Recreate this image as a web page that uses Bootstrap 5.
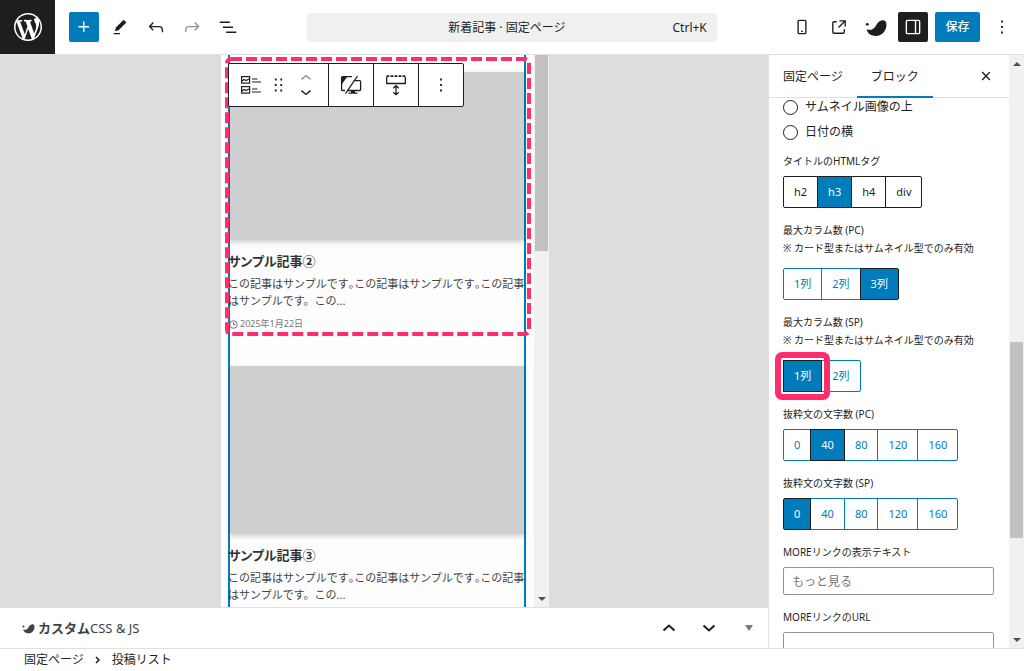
<!DOCTYPE html>
<html lang="ja">
<head>
<meta charset="utf-8">
<meta name="viewport" content="width=device-width, initial-scale=1">
<title>新着記事 · 固定ページ</title>
<link href="https://cdn.jsdelivr.net/npm/bootstrap@5.3.0/dist/css/bootstrap.min.css" rel="stylesheet">
<style>
  :root { --blue:#007cba; --ink:#1e1e1e; --line:#e0e0e0; --pink:#ff2d6c; }
  body { font:12px/18px "Noto Sans","Noto Sans CJK JP",sans-serif; color:var(--ink); background:#fff; }
  svg { display:block; fill:currentColor; flex:none; }
  button { font:inherit; color:inherit; border:0; background:none; padding:0; }
  .editor-top { height:55px; border-bottom:1px solid var(--line); }
  .top-side { width:30%; flex:none; }
  .tools-left { gap:6px; margin-left:14px; }
  .tools-right { gap:7px; padding:12px 7px 0 0; }
  .site-home { width:55px; height:54px; background:var(--ink); color:#fff; }
  .tool-btn { width:30px; height:30px; display:flex; align-items:center; justify-content:center; border-radius:2px; flex:none; }
  .tool-btn.is-primary { background:var(--blue); color:#fff; }
  .tool-btn.is-dark { background:var(--ink); color:#fff; }
  .is-off { color:#949494; }
  .save-btn { width:45px; height:30px; background:var(--blue); color:#fff; border-radius:2px; font-weight:500; }
  .doc-title { width:40%; height:29px; background:#f0f0f0; border-radius:4px; margin-top:13px; padding:0 10px 0 34px; }
  .stage { background:#ddd; padding-left:2px; }
  .device { width:328px; background:#fdfdfd; }
  .device-page { padding:0 8px 0 7px; }
  .post-list { border:solid var(--blue); border-width:0 2px; padding-top:17px; height:100%; }
  .entry { height:294px; }
  .thumb { height:168px; background:#cfcfcf; box-shadow:0 2px 5px rgba(0,0,0,.2); margin-bottom:12px; }
  .entry h3 { font-size:13px; line-height:18px; font-weight:bold; margin:0 -2px 5px; color:#333; font-feature-settings:"palt"; }
  .entry p { font-size:11px; line-height:17px; margin:0 -2px 8px; white-space:nowrap; color:#444; }
  .half-stop { font-feature-settings:"palt"; }
  .entry time { font-size:9px; line-height:14px; color:#777; gap:2px; }
  .entry-mark { position:absolute; left:-5px; top:-15px; width:306px; height:279px; overflow:visible; pointer-events:none; }
  .entry-mark rect { fill:none; stroke:var(--pink); stroke-width:4; stroke-dasharray:11 4; }
  .block-bar { position:absolute; left:7px; top:8px; height:44px; background:#fff; border:1px solid var(--ink); border-radius:2px; z-index:2; }
  .block-bar > * + * { border-left:1px solid var(--ink); }
  .bar-cell { width:45px; display:flex; align-items:center; justify-content:center; }
  .bar-main { width:99px; padding-left:11px; gap:8px; }
  .line-icon { fill:none; stroke:currentColor; }
  .scroll-track { width:15px; background:#f1f1f1; padding:0 1px; flex:none; display:flex; flex-direction:column; }
  .scroll-thumb { background:#c1c1c1; }
  .arrow-up, .arrow-down { border:4px solid transparent; width:0; height:0; align-self:center; }
  .arrow-up { border-bottom-color:#505050; border-top:0; margin:7px 0; }
  .arrow-down { border-top-color:#505050; border-bottom:0; margin:6px 0; }
  .meta-bar { height:41px; padding:0 8px 0 22px; border-top:1px solid var(--line); color:#3c434a; }
  .meta-title { font-size:13px; padding-left:3px; }
  .meta-tools { gap:18px; color:var(--ink); }
  .settings { width:256px; border-left:1px solid var(--line); }
  .settings-tabs { height:43px; border-bottom:1px solid var(--line); flex:none; }
  .tab-btn { height:43px; padding:1px 14px 0; }
  .tab-btn.active { box-shadow:inset 0 -2px 0 var(--blue); }
  .settings-body { padding:0 15px 0 14px; }
  .settings-body fieldset, .field { margin-bottom:14px; }
  .settings-body legend, .field label, .note { font-size:10px; line-height:16px; margin:0; float:none; }
  .note { margin:2px 0 12px; }
  .gap-b { margin-bottom:7px !important; }
  .radio-row { height:18px; margin-bottom:7px; display:flex; align-items:center; gap:7px; }
  .radio-row + fieldset { margin-top:12px; }
  .radio-row input { appearance:none; width:15px; height:15px; border:1px solid var(--ink); border-radius:50%; margin:0; background:#fff; }
  .seg { color:var(--blue); font-size:11px; }
  .seg button { height:32px; padding:0 10px; border:1px solid var(--blue); position:relative; }
  .seg button + button, .seg .marked + button { margin-left:-1px; }
  .seg button[aria-pressed=true] { background:var(--blue); color:#fff; border-color:var(--ink); z-index:1; }
  .seg.dark { color:var(--ink); }
  .seg.dark button { border-color:var(--ink); }
  .seg > :first-child { border-radius:2px 0 0 2px; }
  .seg > :last-child { border-radius:0 2px 2px 0; }
  .marked { position:relative; z-index:2; }
  .marked::after { content:""; position:absolute; inset:-8px; border:6px solid var(--pink); border-radius:7px; z-index:2; pointer-events:none; }
  .field input { width:100%; height:28px; border:1px solid #949494; border-radius:2px; padding:0 8px; font:inherit; display:block; }
  .field input::placeholder { color:#757575; }
  .crumbs { height:23px; border-top:1px solid var(--line); padding-left:24px; }
  .crumbs a { color:var(--ink); text-decoration:none; }
</style>
</head>
<body class="vh-100 d-flex flex-column overflow-hidden">

<header class="editor-top d-flex align-items-start flex-shrink-0">
  <div class="top-side d-flex align-items-center">
    <a href="#" class="site-home d-flex align-items-center justify-content-center" aria-label="WordPress">
      <svg width="28" height="28" viewBox="0 0 20 20"><path d="M20 10c0-5.51-4.49-10-10-10C4.48 0 0 4.49 0 10c0 5.52 4.48 10 10 10 5.51 0 10-4.48 10-10zM7.78 15.37L4.37 6.22c.55-.02 1.17-.08 1.17-.08.5-.06.44-1.13-.06-1.11 0 0-1.45.11-2.37.11-.18 0-.37 0-.58-.01C4.12 2.69 6.87 1.11 10 1.11c2.33 0 4.45.87 6.05 2.34-.68-.11-1.65.39-1.65 1.58 0 .74.45 1.36.9 2.1.35.61.55 1.36.55 2.46 0 1.49-1.4 5-1.4 5l-3.03-8.37c.54-.02.82-.17.82-.17.5-.05.44-1.25-.06-1.22 0 0-1.44.12-2.38.12-.87 0-2.33-.12-2.33-.12-.5-.03-.56 1.2-.06 1.22l.92.08 1.26 3.41zM17.41 10c.24-.64.74-1.87.43-4.25.7 1.29 1.05 2.71 1.05 4.25 0 3.29-1.73 6.24-4.4 7.78.97-2.59 1.94-5.2 2.92-7.78zM6.1 18.09C3.12 16.65 1.11 13.53 1.11 10c0-1.3.23-2.48.72-3.59C3.25 10.3 4.67 14.2 6.1 18.09zm4.03-6.63l2.58 6.98c-.86.29-1.76.45-2.71.45-.79 0-1.57-.11-2.29-.33.81-2.38 1.62-4.74 2.42-7.1z"/></svg>
    </a>
    <div class="tools-left d-flex">
      <button class="tool-btn is-primary" aria-label="ブロックを追加"><svg width="22" height="22" viewBox="0 0 24 24"><path d="M11 12.5V17.5H12.5V12.5H17.5V11H12.5V6H11V11H6V12.5H11Z"/></svg></button>
      <button class="tool-btn" aria-label="ツール"><svg width="22" height="22" viewBox="0 0 24 24"><path d="m19 7-3-3-8.5 8.5-1 4 4-1L19 7Zm-7 11.5H5V20h7v-1.5Z"/></svg></button>
      <button class="tool-btn" aria-label="元に戻す"><svg width="22" height="22" viewBox="0 0 24 24"><path d="M18.3 11.7c-.6-.6-1.4-.9-2.3-.9H6.7l2.9-3.3-1.1-1-4.5 5L8.5 16l1-1-2.7-2.7H16c.5 0 .9.2 1.3.5 1 1 1 3.4 1 4.5v.3h1.5v-.2c0-1.5 0-4.3-1.5-5.7z"/></svg></button>
      <button class="tool-btn is-off" aria-label="やり直す"><svg width="22" height="22" viewBox="0 0 24 24"><path d="M15.6 6.5l-1.1 1 2.9 3.3H8c-.9 0-1.7.3-2.3.9-1.4 1.5-1.4 4.2-1.4 5.6v.2h1.5v-.3c0-1.1 0-3.5 1-4.5.3-.3.7-.5 1.3-.5h9.2L14.5 15l1.1 1.1 4.6-4.6-4.6-5z"/></svg></button>
      <button class="tool-btn" aria-label="リスト表示"><svg width="22" height="22" viewBox="0 0 24 24"><path d="M3 6h11v1.5H3V6Zm3.5 5.5h11V13h-11v-1.5ZM21 17H10v1.5h11V17Z"/></svg></button>
    </div>
  </div>
  <button class="doc-title d-flex align-items-center">
    <span class="flex-fill text-center">新着記事 · 固定ページ</span><span>Ctrl+K</span>
  </button>
  <div class="top-side tools-right d-flex justify-content-end">
    <button class="tool-btn" aria-label="表示"><svg width="22" height="22" viewBox="0 0 24 24"><path d="M15 4H9c-1.1 0-2 .9-2 2v12c0 1.1.9 2 2 2h6c1.1 0 2-.9 2-2V6c0-1.1-.9-2-2-2zm.5 14c0 .3-.2.5-.5.5H9c-.3 0-.5-.2-.5-.5V6c0-.3.2-.5.5-.5h6c.3 0 .5.2.5.5v12zm-4.5-.5h2V16h-2v1.5z"/></svg></button>
    <button class="tool-btn" aria-label="新しいタブで表示"><svg width="22" height="22" viewBox="0 0 24 24"><path d="M19.5 4.5h-7V6h4.44l-5.97 5.97 1.06 1.06L18 7.06v4.44h1.5v-7Zm-13 1a2 2 0 0 0-2 2v10a2 2 0 0 0 2 2h10a2 2 0 0 0 2-2v-3H17v3a.5.5 0 0 1-.5.5h-10a.5.5 0 0 1-.5-.5v-10a.5.5 0 0 1 .5-.5h3V5.5h-3Z"/></svg></button>
    <button class="tool-btn" aria-label="SWELL設定"><svg width="22" height="19" viewBox="0 0 22 19"><circle cx="2.3" cy="6.3" r="1.4"/><path d="M1.6 11.3C5 12.6 8.600 11.400 10.600 8.200 12.400 4.800 14.600 2.200 18.200 2.200 21 2.300 21.900 5.200 21.300 8.800 20.400 13.800 16.500 18 11 18 6 18 2.500 15.400 1.600 11.300Z"/></svg></button>
    <button class="tool-btn is-dark" aria-label="設定"><svg width="22" height="22" viewBox="0 0 24 24"><path d="M18 4H6c-1.1 0-2 .9-2 2v12c0 1.1.9 2 2 2h12c1.1 0 2-.9 2-2V6c0-1.1-.9-2-2-2zm-4 14.5H6c-.3 0-.5-.2-.5-.5V6c0-.3.2-.5.5-.5h8v13zm4.5-.5c0 .3-.2.5-.5.5h-2.5v-13H18c.3 0 .5.2.5.5v12z"/></svg></button>
    <button class="save-btn">保存</button>
    <button class="tool-btn" aria-label="オプション"><svg width="22" height="22" viewBox="0 0 24 24"><path d="M13 19h-2v-2h2v2zm0-6h-2v-2h2v2zm0-6h-2V5h2v2z"/></svg></button>
  </div>
</header>

<div class="d-flex flex-fill overflow-hidden">
  <main class="d-flex flex-column flex-fill">
    <div class="stage d-flex justify-content-center flex-fill overflow-hidden">
      <div class="device d-flex position-relative">
        <div class="device-page flex-fill overflow-hidden">
          <div class="post-list">
            <article class="entry position-relative">
              <div class="thumb"></div>
              <h3>サンプル記事②</h3>
              <p>この記事はサンプルです<span class="half-stop">。</span>この記事はサンプルです<span class="half-stop">。</span>この記事<br>はサンプルです。この...</p>
              <time class="d-flex align-items-center" datetime="2025-01-22"><svg class="line-icon" width="8" height="9" viewBox="1 0 8 9"><circle cx="4.5" cy="4.5" r="3.8"/><path d="M4.5 2v2.7h2"/></svg>2025年1月22日</time>
              <svg class="entry-mark"><rect x="2" y="2" width="302" height="275" rx="4"/></svg>
            </article>
            <article class="entry">
              <div class="thumb"></div>
              <h3>サンプル記事③</h3>
              <p>この記事はサンプルです<span class="half-stop">。</span>この記事はサンプルです<span class="half-stop">。</span>この記事<br>はサンプルです。この...</p>
            </article>
          </div>
        </div>
        <div class="scroll-track">
          <div class="scroll-thumb" style="height:196px"></div>
          <div class="flex-fill"></div>
          <i class="arrow-down"></i>
        </div>
        <div class="block-bar d-flex">
          <div class="bar-main d-flex align-items-center">
            <button aria-label="投稿リスト"><svg class="line-icon" width="22" height="22" viewBox="0 0 22 22" stroke-width="1.2"><rect x="1.6" y="2.6" width="8" height="6.5"/><rect x="1.6" y="12.6" width="8" height="6.5"/><path d="M2 7l2-1.500 2 1L9 5M2 17l2-1.500 2 1L9 15M12 5h5.500M12 8h9M12 15h5.500M12 18h9"/></svg></button>
            <button aria-label="ドラッグ"><svg width="17" height="22" viewBox="3 0 18 24"><path d="M8 7h2V5H8v2zm0 6h2v-2H8v2zm0 6h2v-2H8v2zm6-14v2h2V5h-2zm0 8h2v-2h-2v2zm0 6h2v-2h-2v2z"/></svg></button>
            <div class="d-flex flex-column">
              <button class="is-off" aria-label="上に移動"><svg width="22" height="15" viewBox="0 3 24 16"><path d="M6.5 12.4L12 8l5.5 4.4-.9 1.2L12 10l-4.5 3.6-1-1.2z"/></svg></button>
              <button aria-label="下に移動"><svg width="22" height="15" viewBox="0 5 24 16"><path d="M17.5 11.6L12 16l-5.5-4.4.9-1.2L12 14l4.5-3.6 1 1.2z"/></svg></button>
            </div>
          </div>
          <button class="bar-cell" aria-label="表示デバイス"><svg class="line-icon" width="22" height="20" viewBox="0 0 22 20" stroke-width="1.3"><path d="M12 1.7H2.5Q1.6 1.7 1.6 2.6v12q0 .9.9.9H5M13.5 5.7h6.2q.9 0 .9.9v8q0 .9-.9.9H8M17.5 1 5.5 18.7"/><path d="M2 2h5L2 9zM11 16h4v1.6h2.500v1.200h-9v-1.200H11z" fill="currentColor" stroke="none"/></svg></button>
          <button class="bar-cell" aria-label="余白"><svg class="line-icon" width="22" height="22" viewBox="0 0 22 22" stroke-width="1.3"><path d="M1.7 3v6.5h18.600V3"/><path d="M1.5 2.2h19" stroke-width="1.8" stroke-dasharray="2.8 1.2"/><path d="M11 12v8M8.200 14.200 11 11.700l2.800 2.500M8.200 18.200 11 20.700l2.800-2.500"/></svg></button>
          <button class="bar-cell" aria-label="その他"><svg width="22" height="22" viewBox="0 0 24 24"><path d="M13 19h-2v-2h2v2zm0-6h-2v-2h2v2zm0-6h-2V5h2v2z"/></svg></button>
        </div>
      </div>
    </div>
    <div class="meta-bar d-flex align-items-center flex-shrink-0">
      <svg width="13" height="11" viewBox="0 0 22 19"><circle cx="2.3" cy="6" r="1.8"/><path d="M1.6 11.3C5 12.6 8.600 11.400 10.600 8.200 12.400 4.800 14.600 2.200 18.200 2.200 21 2.300 21.900 5.200 21.300 8.800 20.400 13.800 16.500 18 11 18 6 18 2.500 15.400 1.600 11.300Z"/></svg>
      <span class="meta-title flex-fill"><b>カスタム</b>CSS &amp; JS</span>
      <div class="meta-tools d-flex align-items-center">
        <button aria-label="上へ"><svg class="line-icon" width="22" height="22" viewBox="0 0 22 22" stroke-width="2"><path d="M5.500 13.500 11 8.500l5.500 5"/></svg></button>
        <button aria-label="下へ"><svg class="line-icon" width="22" height="22" viewBox="0 0 22 22" stroke-width="2"><path d="M5.500 8.500 11 13.500l5.500-5"/></svg></button>
        <button aria-label="開閉"><svg width="22" height="6" viewBox="0 0 22 6"><path d="M7 0h8l-4 6z" fill="#787c82"/></svg></button>
      </div>
    </div>
  </main>

  <aside class="settings d-flex flex-shrink-0">
    <div class="d-flex flex-column flex-fill overflow-hidden">
      <div class="settings-tabs d-flex align-items-center">
        <button class="tab-btn">固定ページ</button>
        <button class="tab-btn active">ブロック</button>
        <button class="ms-auto me-2 pe-1" aria-label="閉じる"><svg width="22" height="22" viewBox="0 0 24 24"><path d="M12 13.06l3.712 3.713 1.061-1.06L13.061 12l3.712-3.712-1.06-1.06L12 10.938 8.288 7.227l-1.061 1.06L10.939 12l-3.712 3.712 1.06 1.061L12 13.061z"/></svg></button>
      </div>
      <div class="settings-body flex-fill overflow-hidden">
        <div class="radio-row"><input type="radio" name="cat" id="cat1"><label for="cat1">サムネイル画像の上</label></div>
        <div class="radio-row"><input type="radio" name="cat" id="cat2"><label for="cat2">日付の横</label></div>
        <fieldset><legend class="gap-b">タイトルのHTMLタグ</legend>
          <div class="seg dark d-flex"><button aria-pressed="false">h2</button><button aria-pressed="true">h3</button><button aria-pressed="false">h4</button><button aria-pressed="false">div</button></div></fieldset>
        <fieldset><legend>最大カラム数 (PC)</legend><p class="note">※ カード型またはサムネイル型でのみ有効</p>
          <div class="seg d-flex"><button aria-pressed="false">1列</button><button aria-pressed="false">2列</button><button aria-pressed="true">3列</button></div></fieldset>
        <fieldset><legend>最大カラム数 (SP)</legend><p class="note">※ カード型またはサムネイル型でのみ有効</p>
          <div class="seg d-flex"><span class="marked d-flex"><button aria-pressed="true">1列</button></span><button aria-pressed="false">2列</button></div></fieldset>
        <fieldset><legend class="gap-b">抜粋文の文字数 (PC)</legend>
          <div class="seg d-flex"><button aria-pressed="false">0</button><button aria-pressed="true">40</button><button aria-pressed="false">80</button><button aria-pressed="false">120</button><button aria-pressed="false">160</button></div></fieldset>
        <fieldset><legend class="gap-b">抜粋文の文字数 (SP)</legend>
          <div class="seg d-flex"><button aria-pressed="true">0</button><button aria-pressed="false">40</button><button aria-pressed="false">80</button><button aria-pressed="false">120</button><button aria-pressed="false">160</button></div></fieldset>
        <div class="field"><label class="d-block gap-b" for="more-text">MOREリンクの表示テキスト</label><input type="text" id="more-text" placeholder="もっと見る"></div>
        <div class="field"><label class="d-block gap-b" for="more-url">MOREリンクのURL</label><input type="text" id="more-url"></div>
      </div>
    </div>
    <div class="scroll-track">
      <i class="arrow-up"></i>
      <div style="flex:269"></div>
      <div class="scroll-thumb" style="flex:195"></div>
      <div style="flex:94"></div>
      <i class="arrow-down"></i>
    </div>
  </aside>
</div>

<nav class="crumbs d-flex align-items-center flex-shrink-0" aria-label="パンくず">
  <a href="#">固定ページ</a>
  <svg class="line-icon" width="28" height="12" viewBox="0 0 28 12" stroke-width="1.5"><path d="M12 3l3 3-3 3"/></svg>
  <a href="#">投稿リスト</a>
</nav>
<script src="https://cdn.jsdelivr.net/npm/bootstrap@5.3.0/dist/js/bootstrap.bundle.min.js"></script>
</body>
</html>
